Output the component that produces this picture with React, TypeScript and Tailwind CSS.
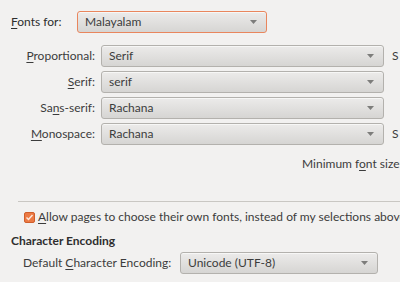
import React from "react";

const Arrow = () => (
  <svg width="7" height="4" viewBox="0 0 7 4" className="shrink-0">
    <path d="M0 0 L7 0 L3.5 4 Z" fill="#7d7d7b" />
  </svg>
);

function Select({ value, className = "", focused = false }: { value: string; className?: string; focused?: boolean }) {
  return (
    <div
      className={`flex items-center justify-between h-[22px] rounded-[3px] border pl-[7px] pr-[9px] bg-gradient-to-b from-[#ecebea] to-[#d6d5d3] shadow-[inset_0_1px_0_#f7f7f6] ${
        focused ? "border-[#e9865d] shadow-[0_0_0_1px_#f3b89e]" : "border-[#b3b1ad]"
      } ${className}`}
    >
      <span className="text-[#3c3c3c]">{value}</span>
      <Arrow />
    </div>
  );
}

const U = ({ children }: { children: React.ReactNode }) => <span className="underline underline-offset-2">{children}</span>;

export default function App() {
  const rows: { label: React.ReactNode; value: string; side?: string }[] = [
    { label: <><U>P</U>roportional:</>, value: "Serif", side: "S" },
    { label: <><U>S</U>erif:</>, value: "serif" },
    { label: <>Sa<U>n</U>s-serif:</>, value: "Rachana" },
    { label: <><U>M</U>onospace:</>, value: "Rachana", side: "S" },
  ];
  return (
    <div
      className="w-[400px] h-[282px] bg-[#f2f1f0] overflow-hidden text-[12px] leading-[18px] text-[#3c3c3c] whitespace-nowrap"
      style={{ fontFamily: "Lato, 'Noto Sans', sans-serif" }}
    >
      <div className="flex items-center pt-[11px] pl-[11px] gap-[10px]">
        <span className="w-[56px] text-[#2e2e2e]"><U>F</U>onts for:</span>
        <Select value="Malayalam" focused className="w-[190px]" />
      </div>
      <div className="flex flex-col gap-[4px] pt-[12px]">
        {rows.map((r, i) => (
          <div key={i} className="flex items-center">
            <div className="w-[95px] text-right">{r.label}</div>
            <Select value={r.value} className="ml-[6px] w-[283px]" />
            <span className="ml-[8px]">{r.side ?? ""}</span>
          </div>
        ))}
      </div>
      <div className="pl-[302px] pt-[10px]">Minimum f<U>o</U>nt size:</div>
      <div className="ml-[18px] mt-[28px] border-t border-[#c9c7c3]" />
      <div className="flex items-center pl-[24px] pt-[6px] gap-[3px]">
        <svg width="11" height="11" viewBox="0 0 11 11" className="shrink-0">
          <rect x="0.5" y="0.5" width="10" height="10" rx="1.5" fill="#ec7a44" stroke="#cf5f2c" />
          <path d="M2.5 5.5 L4.5 7.5 L8.5 3" stroke="#fde9dd" strokeWidth="1.5" fill="none" />
        </svg>
        <span><U>A</U>llow pages to choose their own fonts, instead of my selections above</span>
      </div>
      <div className="pl-[11px] pt-[6px] font-bold text-[#2e2e2e]">Character Encoding</div>
      <div className="flex items-center pl-[23px] pt-[2px]">
        <span className="w-[157px]">Default <U>C</U>haracter Encoding:</span>
        <Select value="Unicode (UTF-8)" className="w-[198px]" />
      </div>
    </div>
  );
}
